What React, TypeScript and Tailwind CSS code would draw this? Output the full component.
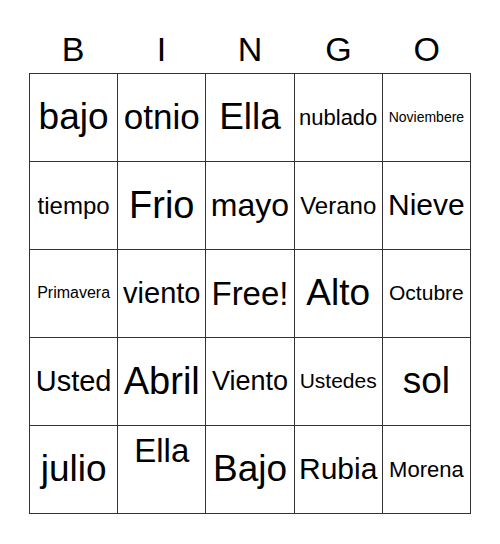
type Cell = { word: string; size: string; top?: boolean };

const letters = ['B', 'I', 'N', 'G', 'O'];

const cells: Cell[] = [
  { word: 'bajo', size: 'text-[37px]' },
  { word: 'otnio', size: 'text-[35px]' },
  { word: 'Ella', size: 'text-[37px]' },
  { word: 'nublado', size: 'text-[22px]' },
  { word: 'Noviembere', size: 'text-[14px]' },

  { word: 'tiempo', size: 'text-[24px]' },
  { word: 'Frio', size: 'text-[38px]' },
  { word: 'mayo', size: 'text-[32px]' },
  { word: 'Verano', size: 'text-[24px]' },
  { word: 'Nieve', size: 'text-[30px]' },

  { word: 'Primavera', size: 'text-[16px]' },
  { word: 'viento', size: 'text-[29px]' },
  { word: 'Free!', size: 'text-[33px]' },
  { word: 'Alto', size: 'text-[37px]' },
  { word: 'Octubre', size: 'text-[21px]' },

  { word: 'Usted', size: 'text-[29px]' },
  { word: 'Abril', size: 'text-[38px]' },
  { word: 'Viento', size: 'text-[27px]' },
  { word: 'Ustedes', size: 'text-[21px]' },
  { word: 'sol', size: 'text-[37px]' },

  { word: 'julio', size: 'text-[37px]' },
  { word: 'Ella', size: 'text-[33px]', top: true },
  { word: 'Bajo', size: 'text-[37px]' },
  { word: 'Rubia', size: 'text-[30px]' },
  { word: 'Morena', size: 'text-[22px]' },
];

export default function App() {
  return (
    <div className="w-[500px] h-[544px] bg-white pt-[30px] font-['Liberation_Sans',Arial,sans-serif] text-black">
      {/* Header letters */}
      <div className="w-[442px] mx-auto grid grid-cols-5">
        {letters.map((l) => (
          <div key={l} className="text-center text-[34px] leading-[38px]">
            {l}
          </div>
        ))}
      </div>

      {/* Card */}
      <div className="w-[442px] mx-auto mt-[5px] grid grid-cols-5 border-l border-t border-[#333]">
        {cells.map((c, i) => (
          <div
            key={i}
            className={`h-[88px] border-r border-b border-[#333] flex justify-center ${
              c.top ? 'items-start pt-[6px]' : 'items-center'
            }`}
          >
            <span className={`${c.size} leading-[1.15] whitespace-nowrap`}>{c.word}</span>
          </div>
        ))}
      </div>
    </div>
  );
}
